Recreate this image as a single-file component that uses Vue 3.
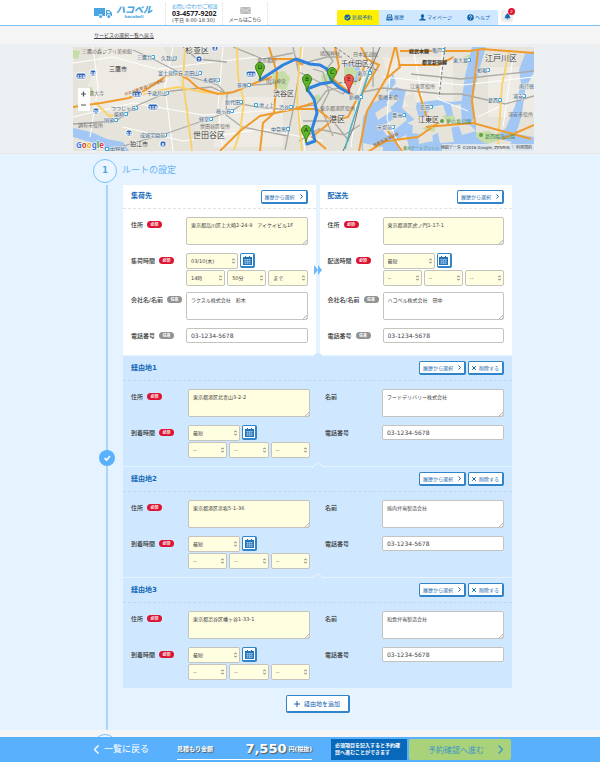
<script setup>
import { reactive } from 'vue'

const nav = [
  { icon: 'check', text: '新規予約', current: true },
  { icon: 'tray', text: '履歴' },
  { icon: 'user', text: 'マイページ' },
  { icon: 'help', text: 'ヘルプ' },
]

const ends = reactive([
  {
    id: 'pickup', title: '集荷先', timeLabel: '集荷時間',
    address: '東京都品川区上大崎2-24-9　アイケイビル1F',
    day: '03/10(木)', parts: ['14時', '50分', 'まで'],
    name: 'ラクスル株式会社　鈴木', tel: '03-1234-5678',
  },
  {
    id: 'delivery', title: '配送先', timeLabel: '配送時間',
    address: '東京都港区虎ノ門1-17-1',
    day: '最短', parts: ['--', '--', '--'],
    name: 'ハコベル株式会社　田中', tel: '03-1234-5678',
  },
])

const stops = reactive([
  { id: 'stop1', title: '経由地1', address: '東京都港区北青山3-2-2', name: 'フードデリバリー株式会社', tel: '03-1234-5678' },
  { id: 'stop2', title: '経由地2', address: '東京都港区赤坂5-1-36', name: '焼肉弁当製造会社', tel: '03-1234-5678' },
  { id: 'stop3', title: '経由地3', address: '東京都渋谷区幡ヶ谷1-33-1', name: '和食弁当製造会社', tel: '03-1234-5678' },
])

const wards = [
  ['杉並区', 112, 6, 8], ['世田谷区', 120, 91, 8], ['渋谷区', 200, 49, 7], ['三鷹市', 36, 24, 6],
  ['狛江市', 57, 99, 6], ['千代田区', 268, 19, 7], ['港区', 256, 75, 8], ['江東区', 345, 75, 7],
  ['江戸川区', 412, 14, 8],
]
const places = [
  ['三鷹の森ジブリ美術館', 9, 6], ['深大寺', 16, 48], ['調布市役所', 5, 80], ['世田谷区役所', 127, 81],
  ['東京都庁', 184, 15], ['明治神宮', 193, 36], ['靖国神社', 247, 8], ['日本武道館', 280, 9], ['東京都港区役所', 247, 63],
  ['築地市場', 305, 52], ['江東区役所', 337, 41], ['浦安市役所', 435, 69],
]
const stations = [
  ['三鷹台', 64, 12, 80], ['久我山', 88, 13, 102], ['富士見ヶ丘', 85, 28, 102], ['浜田山', 111, 28, 127],
  ['永福町', 130, 35, 145], ['笹塚', 164, 40, 176], ['千歳烏山', 74, 48, 94], ['つつじヶ丘', 38, 63, 63],
  ['柴崎', 41, 69, 53], ['国領', 31, 75, 43], ['新代田', 152, 57, 168], ['梅ヶ丘', 143, 66, 159],
  ['池ノ上', 186, 60, 183], ['渋谷', 206, 62, 218], ['経堂', 126, 74, 138], ['中目黒', 198, 84, 215],
  ['成城学園前', 67, 90, 92], ['中野島', 37, 104, 34], ['亀戸', 359, 5, 370], ['東京', 284, 28, 297],
  ['新橋', 276, 52, 288], ['豊洲', 319, 70, 331], ['辰巳', 347, 62, 358], ['市場前', 304, 82, 320],
  ['葛西', 415, 55, 427], ['浦安', 440, 51, 451], ['船堀', 404, 25, 415], ['東大島', 380, 15, 396], ['南行徳', 446, 41, 459],
]
const shields = [
  ['110', 8, 29], ['14', 20, 26], ['114', 64, 47], ['118', 80, 60], ['20', 23, 64],
  ['7', 126, 12], ['420', 178, 27], ['11', 56, 86], ['8', 90, 97], ['4', 142, 1],
]
const pins = [
  ['A', 233, 84, 96], ['B', 234, 33, 45], ['C', 259, 26, 36], ['D', 187, 21, 33], ['E', 276, 33, 46],
]
</script>

<template>
  <div class="page">
    <header class="top">
      <a class="logo" href="#">
        <svg class="truck" viewBox="0 0 18 12" aria-hidden="true">
          <path d="M0 1h11v8H8.600a2 2 0 0 0-4 0H0zM12 3h3.500L18 6v3h-1.200a2 2 0 0 0-4 0H12z" fill="#4aa5e2" />
          <path d="M13.200 4.200h1.800l1.400 1.900h-3.200z" fill="#fff" />
          <circle cx="6.600" cy="9.600" r="1.500" fill="#4aa5e2" /><circle cx="14.800" cy="9.600" r="1.500" fill="#4aa5e2" />
        </svg>
        <span class="brand"><b>ハコベル</b><small>hacobell</small></span>
      </a>
      <div class="contact">
        <span class="ask">お問い合わせ/ご相談</span>
        <strong>03-4577-9202</strong>
        <span>(平日 9:00-18:30)</span>
      </div>
      <a class="mail" href="#">
        <svg viewBox="0 0 12 8" aria-hidden="true"><path d="M0 0h12v8H0z" fill="#bbb" /><path d="M0 .5l6 4 6-4M0 8l4.500-4M12 8L7.500 4" fill="none" stroke="#eee" stroke-width=".8" /></svg>
        メールはこちら
      </a>
      <nav>
        <a v-for="n in nav" :key="n.text" href="#" :class="{ current: n.current }">
          <svg viewBox="0 0 8 8" aria-hidden="true">
            <template v-if="n.icon === 'check'"><circle cx="4" cy="4" r="3.500" fill="#1164ae" /><path d="M2.200 4l1.300 1.400L6 2.800" fill="none" stroke="#ff0" /></template>
            <template v-else-if="n.icon === 'tray'"><path d="M1.500.5h5l1 4V7.500h-7V4.500z" fill="#1164ae" /><path d="M2.200 1.700h3.600M1.900 3h4.200M1.300 4.700h1.500l.5 1h1.400l.5-1h1.500" fill="none" stroke="#fff" stroke-width=".7" /></template>
            <path v-else-if="n.icon === 'user'" d="M4 .3a1.800 1.900 0 0 1 1.100 3.500L5 5l2.700 1.200v1.300H.3V6.200L3 5l-.1-1.200A1.800 1.900 0 0 1 4 .3z" fill="#1164ae" />
            <template v-else><circle cx="4" cy="4" r="3.700" fill="#1164ae" /><path d="M2.800 3.200C2.800 1.500 5.300 1.600 5.300 3 5.300 3.900 4 3.900 4 5M4 5.700v.8" fill="none" stroke="#fff" stroke-width=".9" /></template>
          </svg>
          {{ n.text }}
        </a>
      </nav>
      <button class="bell" type="button" aria-label="お知らせ">
        <svg viewBox="0 0 8 8" aria-hidden="true"><path d="M4 .3c.5 0 .6.4.6.7 2 .6 1.700 3.400 2.900 5H.5c1.200-1.600.9-4.400 2.900-5 0-.3.100-.7.6-.7zM3 6.500h2a1 1 0 0 1-2 0z" fill="#1164ae" /></svg>
        <span class="count">2</span>
      </button>
    </header>

    <div class="crumb"><a href="#">サービスの選択一覧へ戻る</a></div>

    <div class="mapwrap">
      <svg class="map" viewBox="0 0 461 104" preserveAspectRatio="xMidYMid slice" role="img" aria-label="ルート地図">
        <rect width="461" height="104" fill="#e6e3db" />
        <g fill="#eeebe4">
          <path d="M30 0h60l18 40-60 28-40-12zM150 50h60v50h-70zM310 10h70v50h-60zM415 20h46v50h-46z" />
        </g>
        <g fill="#c5dda6">
          <path d="M199 26l12-2 6 7-4 13-12-4zM248 28l12-3 2 10-13 2zM238 50l8-3 3 6-8 4zM345 76l18 2-2 7-16-4zM369 69l10-3 4 6-8 4zM398 86l18-2 14 8-20 6zM10 42l9-2 2 8-9 2zM0 3l7 1-2 8-5-1zM390 10l8-3 2 9-8 2zM333 90l20-2v10l-16 2z" />
          <path d="M271 20l12-1 5 9-5 10-12-4z" />
        </g>
        <g fill="#a3c7f4">
          <path d="M289 104l-1-13 2-21 9-14 10-4 14-12 10 3-4 18 12 11-2 14 20 3 10-6 12-3 22-3v13l8 6 10 2 8 6h-140z" />
          <path d="M399 0h14l-6 20-5 20-3 15 2 14-3 10h-9l-1-20 4-30z" />
          <path d="M461 4l-9 3-6 16 2 14-6 22-9 22-12 10 18 4-8 9h30v-14l-18-3 6-20 3-24 9-18z" />
          <path d="M0 81l18 4 16 7 16 3 6 9H34l-10-7L0 90z" />
          <path d="M320 26l3 10-8 10-2-3zM342 56l22-3 14 2 18-2v4l-18 1 2 10-6 2-4-12-12 2-8 14-4-2zM271 20l4-5 9 1 4 8-4 11-3-1 3-9-4-7z" />
        </g>
        <g fill="#e6e3db">
          <path d="M302 66l14-9 3 7-14 9zM308 80l22-14 4 7-20 16zM323 93l10-5 4 16h-10zM313 56l8-8 5 4-8 8zM334 76l14-6 12 6-12 6zM345 88l14-2 1 8-14 3zM364 82l14-3 3 16-14 1zM331 50l10-4 3 12-8 2zM290 104v-8l20 4v4zM385 76l12 2 6 6-14 4z" />
        </g>
        <g fill="none" stroke="#fff" stroke-width="1">
          <path d="M0 16l40-6 44 12 40-5 60-7 60 5M20 0l5 40-8 50M100 0l-8 40 8 64M150 0l-5 60 5 44M0 70l60-14 70 12 90-6M230 0l-6 50 8 54M300 0l-16 50-6 50M340 0l10 56M370 0l-5 52 30 12M310 30l80 8 70-8M405 70l50-24M440 10l-10 70M318 12l-4 60 15 32M50 80l60 14 80-12 60 12" />
        </g>
        <g fill="none" stroke="#aaa9a6" stroke-width="1.300">
          <path d="M0 77l43-3 20-15 35-15 40-4 16 7 25-9 20-1M36 103l56-16 46-16 21-7 10-7 15 3 32 3M60 3l16 7 35 18 34 10 9 10-1 20 16 12 46 9M220 0l6 27-6 36-8 40M224 18l30-8 15 0M226 25l20 10 24 12 8-9M223 60l20-2 10-14 16-4 12 8M226 94l20-12 25 6 16-10M240 22l10 3 6 20-8 16 12 28M250 0l10 14-8 10M276 94l-16-20-30 0M290 45l20-4 60 6 18 0 44 10 29-8M300 0v40M160 0l30 12 30-6M110 0l14 12 30 3M338 27l50 5 73-8" />
        </g>
        <g fill="none" stroke="#fbd165" stroke-width="1.800">
          <path d="M112 0l-2 36 4 28 5 40M164 0l1 30 6 25-4 30-6 18M22 55l14 14 14-3M60 50l24-6 21-4 24 5 25 2M228 0l-4 50 5 54M436 4l-7 34-4 60" />
        </g>
        <g fill="none" stroke="#f19b2c" stroke-width="2">
          <path d="M0 60l28-4 28-5 17-8 20-14 12-2 10 5 10 9 20 6 16-2 26-11 12-4M147 104l20-20 20-15 35-7 18-6M196 0l8 26-3 40-11 10-3 28M200 12h20l10 6M286 104l8-40 20-34 8-30M262 0l4 20-6 12 24 20-9 18-16 4-20 16 14 12M323 0l4 20-14 12M327 4h70l12-2 52 4M325 18h40l16-8M345 42l8 26 12 8-20 14-32 4-20 12M353 80l47-4 58 16M461 78l-32 14M405 4l-6 50 3 22M315 84l14 20M224 62h20l18 14M288 0l6 12-8 22M294 12l12 6-20 34" />
        </g>
        <g fill="none" stroke="#777" stroke-width="1"><path d="M270 104l10-22 8-32 8-24 11-26" /><path d="M262 0l20 14 24 10M266 36l20-2 14-20M372 0l-6 50" stroke-dasharray="3 2" /></g>
        <path d="M272 102l6-22 9-28 10-30" fill="none" stroke="#49b4c4" stroke-width="1.500" />
        <path d="M187 33l23-15 13-6 14 5 10 1 7 4 5 13-12 2-13 5 7 10 3 14-5 16 3 12-8 3M259 34l8 7 9 5" fill="none" stroke="#2e82e0" stroke-width="3" stroke-linejoin="round" stroke-linecap="round" />
        <g class="shield">
          <g v-for="s in shields" :key="s[0]">
            <rect :x="s[1] - (s[0].length > 2 ? 5 : 3)" :y="s[2] - 3" :width="s[0].length > 2 ? 10 : 6" height="6" rx="2" />
            <text :x="s[1]" :y="s[2] + 2">{{ s[0] }}</text>
          </g>
        </g>
        <g v-for="s in stations" :key="s[0]">
          <rect :x="s[3] - 2" :y="s[2] - 4" width="4" height="4" rx="1" fill="#35a7dc" /><rect :x="s[3] - 1" :y="s[2] - 3" width="2" height="2" fill="#fff" />
          <text class="station" :x="s[1]" :y="s[2]">{{ s[0] }}</text>
        </g>
        <text v-for="p in places" :key="p[0]" class="place" :x="p[1]" :y="p[2]">{{ p[0] }}</text>
        <text v-for="w in wards" :key="w[0]" class="ward" :x="w[1]" :y="w[2]" :font-size="w[3]">{{ w[0] }}</text>
        <text class="road" transform="translate(52 49) rotate(-20)">中央自動車道(河口湖線)</text>
        <text class="road" transform="translate(301 100) rotate(-26)">首都高速湾岸線</text>
        <text class="line" x="336" y="6">総武本線</text><text class="line" x="349" y="17">都営新宿線</text>
        <text class="park" x="373" y="76">夢の島公園</text><text class="park" x="412" y="91">葛西臨海公園</text><text class="park small" x="330" y="103">東京ゲートブリッジ</text>
        <g fill="#5ba546"><circle cx="369" cy="74" r="2" /><circle cx="408" cy="88" r="2" /></g>
        <g v-for="p in pins" :key="p[0]" class="pin" :class="{ goal: p[0] === 'E' }">
          <path :d="`M${p[1]} ${p[3]}C${p[1]} ${p[3] - 6} ${p[1] - 4.5} ${p[2] + 3} ${p[1] - 4.5} ${p[2] - 1}a4.500 4.500 0 0 1 9 0C${p[1] + 4.5} ${p[2] + 3} ${p[1]} ${p[3] - 6} ${p[1]} ${p[3]}z`" />
          <text :x="p[1]" :y="p[2] + 1">{{ p[0] }}</text>
        </g>
        <rect x="5" y="41" width="12" height="23" rx="1" fill="#fff" />
        <path d="M8 47h5M10.500 44.500v5M8 58h5" stroke="#555" stroke-width="1.200" />
        <text class="google" x="3" y="101"><tspan fill="#4279e8">G</tspan><tspan fill="#e33f31">o</tspan><tspan fill="#eeb211">o</tspan><tspan fill="#4279e8">g</tspan><tspan fill="#30a050">l</tspan><tspan fill="#e33f31">e</tspan></text>
        <rect x="369" y="97" width="92" height="7" fill="#f2f1ee" opacity=".75" />
        <text class="copy" x="459" y="102">地図データ ©2016 Google, ZENRIN ｜ 利用規約</text>
      </svg>
    </div>

    <main>
      <h1><span class="step">1</span>ルートの設定</h1>
      <div class="body">
        <div class="rail">
          <svg viewBox="0 0 16 16" aria-hidden="true"><circle cx="8" cy="8" r="8" fill="#59b1fd" /><path d="M5.500 8l2 2 3.500-4" fill="none" stroke="#fff" stroke-width="1.600" /></svg>
        </div>
        <form @submit.prevent>
          <div class="ends">
            <section v-for="e in ends" :key="e.id" class="card">
              <div class="head"><h2>{{ e.title }}</h2><button type="button">履歴から選択<svg class="chev" viewBox="0 0 3 5" aria-hidden="true"><path d="M.5.5l2 2-2 2" /></svg></button></div>
              <div class="fields">
                <label :for="e.id + 'a'">住所<em>必須</em></label>
                <textarea :id="e.id + 'a'" v-model="e.address" class="need"></textarea>
                <label :for="e.id + 'd'">{{ e.timeLabel }}<em>必須</em></label>
                <div class="when">
                  <span class="sel day"><select :id="e.id + 'd'"><option>{{ e.day }}</option></select><svg viewBox="0 0 3 6" aria-hidden="true"><path d="M.3 2.300L1.500.8l1.200 1.500M.3 3.700l1.200 1.500 1.200-1.500" /></svg></span>
                  <button class="cal" type="button" aria-label="カレンダー"><svg viewBox="0 0 9 9" aria-hidden="true"><path d="M0 1h9v8H0z" fill="#2272b9" /><path d="M2.500 0v2M6.500 0v2" stroke="#2272b9" /><path d="M1 3.500h7M1 5.300h7M1 7.200h7M2.700 3v5.200M4.500 3v5.200M6.300 3v5.200" stroke="#bcd8f0" stroke-width=".5" /></svg></button>
                  <span v-for="(p, i) in e.parts" :key="i" class="sel part"><select :aria-label="e.timeLabel + (i + 1)"><option>{{ p }}</option></select><svg viewBox="0 0 3 6" aria-hidden="true"><path d="M.3 2.300L1.500.8l1.200 1.500M.3 3.700l1.200 1.500 1.200-1.500" /></svg></span>
                </div>
                <label :for="e.id + 'n'" class="snug">会社名/名前<em class="any">任意</em></label>
                <textarea :id="e.id + 'n'" v-model="e.name" class="snug"></textarea>
                <label :for="e.id + 't'">電話番号<em class="any">任意</em></label>
                <input :id="e.id + 't'" v-model="e.tel" type="tel">
              </div>
            </section>
            <svg class="arrow" viewBox="0 0 8 10" aria-hidden="true"><path d="M0 0l4 5-4 5zM4 0l4 5-4 5z" fill="#6bb9fb" /></svg>
          </div>
          <section v-for="s in stops" :key="s.id" class="stop">
            <svg class="notch" viewBox="0 0 12 6" aria-hidden="true"><path d="M0 6l6-5 6 5z" fill="#d0e8ff" /><path d="M0 5.500l6-5 6 5" fill="none" stroke="#edf6ff" /></svg>
            <div class="head"><h2>{{ s.title }}</h2><button type="button">履歴から選択<svg class="chev" viewBox="0 0 3 5" aria-hidden="true"><path d="M.5.5l2 2-2 2" /></svg></button><button class="del" type="button"><svg class="cross" viewBox="0 0 4 4" aria-hidden="true"><path d="M.2.2l3.600 3.600M3.800.2L.2 3.800" /></svg>削除する</button></div>
            <div class="halves">
              <div class="fields">
                <label :for="s.id + 'a'">住所<em>必須</em></label>
                <textarea :id="s.id + 'a'" v-model="s.address" class="need"></textarea>
                <label :for="s.id + 'd'">到着時間<em>必須</em></label>
                <div class="when">
                  <span class="sel day"><select :id="s.id + 'd'"><option>最短</option></select><svg viewBox="0 0 3 6" aria-hidden="true"><path d="M.3 2.300L1.500.8l1.200 1.500M.3 3.700l1.200 1.500 1.200-1.500" /></svg></span>
                  <button class="cal" type="button" aria-label="カレンダー"><svg viewBox="0 0 9 9" aria-hidden="true"><path d="M0 1h9v8H0z" fill="#2272b9" /><path d="M2.500 0v2M6.500 0v2" stroke="#2272b9" /><path d="M1 3.500h7M1 5.300h7M1 7.200h7M2.700 3v5.200M4.500 3v5.200M6.300 3v5.200" stroke="#bcd8f0" stroke-width=".5" /></svg></button>
                  <span v-for="i in 3" :key="i" class="sel part"><select :aria-label="'到着時間' + i"><option>--</option></select><svg viewBox="0 0 3 6" aria-hidden="true"><path d="M.3 2.300L1.500.8l1.200 1.500M.3 3.700l1.200 1.500 1.200-1.500" /></svg></span>
                </div>
              </div>
              <div class="fields">
                <label :for="s.id + 'n'">名前</label>
                <textarea :id="s.id + 'n'" v-model="s.name"></textarea>
                <label :for="s.id + 't'">電話番号</label>
                <input :id="s.id + 't'" v-model="s.tel" type="tel">
              </div>
            </div>
          </section>
          <button class="add" type="button"><svg viewBox="0 0 6 6" aria-hidden="true"><path d="M0 3h6M3 0v6" stroke="#1164ae" /></svg>経由地を追加</button>
        </form>
      </div>
    </main>

    <div class="next"><span class="step"></span></div>

    <footer>
      <a class="back" href="#"><svg viewBox="0 0 5 9" aria-hidden="true"><path d="M4.500.5l-4 4 4 4" fill="none" stroke="#fff" stroke-width="1.400" /></svg>一覧に戻る</a>
      <div class="price"><span>見積もり金額</span><strong>7,550</strong><span>円(税抜)</span></div>
      <p>必須項目を記入すると予約確認へ進むことができます</p>
      <button class="go" type="button">予約確認へ進む<svg viewBox="0 0 5 9" aria-hidden="true"><path d="M.5.5l4 4-4 4" fill="none" stroke="#3f96c4" stroke-width="1.400" /></svg></button>
    </footer>
  </div>
</template>

<style>
body { margin: 0; background: #f5f5f5; }
</style>

<style scoped>
.page, .page button, .page input, .page select, .page textarea { font-family: "DejaVu Sans", "Noto Sans CJK JP", sans-serif; }
.page { font-size: 5px; line-height: 7px; color: #444; }
.page * { box-sizing: border-box; }
a { color: inherit; text-decoration: none; }
svg { display: block; flex: none; }
button { cursor: pointer; }

.top { display: flex; align-items: flex-end; height: 26px; padding: 0 87px 0 94px; background: #fff; border-bottom: 1px solid #7cc2f7; }
.logo { display: flex; gap: 4px; align-self: flex-start; padding-top: 5px; width: 71px; color: #4aa5e2; }
.truck { width: 18px; height: 12px; margin-top: 2px; }
.brand { display: flex; flex-direction: column; align-items: center; }
.brand b { font-size: 9px; line-height: 10px; font-style: italic; font-weight: 900; }
.brand small { font-size: 4px; line-height: 4px; font-weight: bold; }
.contact, .mail { display: flex; flex-direction: column; height: 22px; border-left: 1px dotted #ddd; }
.contact { width: 57px; padding-left: 6px; white-space: nowrap; }
.contact span { line-height: 7px; font-feature-settings: "palt"; }
.contact .ask { color: #4aa5e2; }
.contact strong { font-family: "Open Sans", sans-serif; font-size: 7px; line-height: 7px; color: #222; }
.mail { width: 46px; align-items: center; gap: 2px; padding-top: 4px; border-right: 1px dotted #ddd; font-feature-settings: "palt"; }
.mail svg { width: 11px; height: 7px; }
nav { display: flex; height: 15px; margin-left: auto; background: #d0e8ff; border-radius: 2px 2px 0 0; color: #1164ae; }
nav a { display: flex; align-items: center; gap: 1px; padding: 0 8px 0 7px; white-space: nowrap; }
nav a.current { padding: 0 7px; background: #ffef00; border-radius: 2px 0 0 0; }
nav svg { width: 7px; height: 7px; }
.bell { position: relative; align-self: flex-start; display: grid; place-items: center; width: 12px; height: 12px; margin: 10px 0 0 3px; padding: 0; border: 0; border-radius: 2px; background: #eee; }
.bell svg { width: 7px; height: 7px; }
.count { position: absolute; top: -2px; right: -2px; width: 7px; height: 7px; border-radius: 50%; background: #dc1432; color: #fff; font-size: 4px; line-height: 7px; text-align: center; }

.crumb { height: 18px; padding: 6px 94px 0; background: #f5f5f5; }
.crumb a { text-decoration: underline; }
.mapwrap { padding: 3px 66px 2px 73px; background: #edf0f3; border-bottom: 1px solid #e8e8e8; }
.map { width: 100%; height: 104px; }
.map text { font-size: 5px; }
.map .station { fill: #35638c; stroke: #eeebe4; stroke-width: 1px; paint-order: stroke; }
.map .place { fill: #6b6b6b; }
.map .ward { fill: #333; font-size: revert-layer; stroke: #f3f1ec; stroke-width: 1px; paint-order: stroke; }
.map .road { fill: #a0601c; font-size: 4px; }
.map .line { fill: #333; font-weight: bold; }
.map .park { fill: #3c8a4a; }
.map .park.small { font-size: 4px; }
.map .copy { fill: #333; font-size: 4px; text-anchor: end; }
.map .google { font-family: "Noto Sans", sans-serif; font-size: 8px; font-weight: bold; stroke: #fff; stroke-width: 1px; paint-order: stroke; }
.shield rect { fill: #2d63b4; stroke: #fff; stroke-width: 1px; }
.map .shield text { fill: #fff; font-size: 4px; font-weight: bold; text-anchor: middle; }
.pin path { fill: #5db52c; stroke: #3a8216; stroke-width: 1px; }
.pin.goal path { fill: #ee5850; stroke: #b8362f; }
.pin text { font-size: 6px; text-anchor: middle; fill: #163b06; }
.pin.goal text { fill: #5d1210; }

main { padding: 4px 88px 0 93px; background: #e5f2ff; }
h1 { display: flex; align-items: center; gap: 5px; height: 25px; margin: 0; color: #64b2f2; font-size: 9px; font-weight: normal; }
.step { display: grid; place-items: center; width: 24px; height: 24px; border: 1px solid #7cc2f7; border-radius: 50%; background: #eaf5ff; color: #4aa5e2; font-size: 8px; font-weight: bold; }
.body { display: flex; margin-top: 2px; }
.rail { display: flex; align-items: center; justify-content: center; width: 30px; padding-right: 2px; background: linear-gradient(#a9d5fb, #a9d5fb) 13px 0 / 2px 100% no-repeat; }
.rail svg { width: 16px; height: 16px; }
form { flex: 1; min-width: 0; display: flex; flex-direction: column; gap: 1px; padding-bottom: 17px; }
.ends { position: relative; display: grid; grid-template-columns: 1fr 1fr; gap: 4px; }
.arrow { position: absolute; top: 80px; left: 50%; width: 8px; height: 10px; margin-left: -4px; }
.card { background: #fff; }
.head { display: flex; align-items: center; gap: 2px; height: 24px; padding: 0 8px; border-bottom: 1px dashed #dfe3e6; }
h2 { flex: 1; margin: 0; color: #1169b8; font-size: 7px; font-weight: bold; }
.head button, .add { display: flex; align-items: center; justify-content: center; height: 14px; padding: 0; border: 1px solid #3284c8; border-right-width: 2px; border-bottom-width: 2px; border-radius: 2px; background: #fff; color: #1164ae; font-size: 5px; white-space: nowrap; }
.head button { width: 47px; gap: 5px; }
.head .del { width: 36px; gap: 3px; }
.chev { width: 3px; height: 5px; fill: none; stroke: #1164ae; stroke-width: 1px; }
.cross { width: 4px; height: 4px; fill: none; stroke: #1164ae; stroke-width: 1px; }
.fields { display: grid; grid-template-columns: 55px minmax(0, 1fr); row-gap: 8px; align-items: start; align-content: start; }
.card .fields { padding: 8px 8px 12px; }
label { display: flex; align-items: center; gap: 4px; height: 15px; color: #333; font-size: 6px; font-weight: 500; white-space: nowrap; }
.snug { margin-top: -2px; }
em { width: 15px; height: 7px; border-radius: 4px; background: #dc1432; color: #fff; font-size: 4px; line-height: 7px; font-style: normal; font-weight: bold; text-align: center; }
em.any { background: #909090; }
textarea, input, select { display: block; width: 100%; margin: 0; border: 1px solid #c4c4bf; border-radius: 2px; background: #fff; color: #444; font-size: 5px; line-height: 7px; outline: 0; }
textarea { height: 28px; padding: 4px; resize: none; overflow: hidden; background: linear-gradient(135deg, transparent 50%, #bbb 50%, #bbb 62%, #eee 62%, #eee 78%, #bbb 78%) right bottom / 4px 4px no-repeat #fff; }
textarea.need, select { background-color: #fffee1; }
input { height: 15px; padding: 0 4px; font-size: 6px; }
.when { display: flex; flex-wrap: wrap; gap: 1px 2px; }
.sel { display: grid; align-items: center; }
.sel select { grid-area: 1 / 1; height: 16px; padding: 0 4px; appearance: none; }
.sel svg { grid-area: 1 / 1; justify-self: end; width: 3px; height: 6px; margin-right: 3px; pointer-events: none; fill: none; stroke: #777; stroke-width: 1px; }
.day { width: 52px; }
.part { flex: 1; min-width: 38px; }
.cal { display: grid; place-items: center; width: 15px; height: 15px; margin-right: 50px; padding: 0; border: 1px solid #3284c8; border-right-width: 2px; border-bottom-width: 2px; border-radius: 2px; background: #fff; }
.cal svg { width: 9px; height: 9px; }

.stop { position: relative; background: #d0e8ff; }
.stop .head { height: 25px; border-color: #bfd9ee; }
.notch { position: absolute; top: -5px; left: 50%; width: 12px; height: 6px; margin-left: -6px; }
.halves { display: grid; grid-template-columns: 1fr 1fr; column-gap: 15px; padding: 8px; }
.stop .fields { grid-template-columns: 57px minmax(0, 1fr); }
.add { align-self: center; gap: 4px; width: 64px; height: 18px; margin-top: 6px; font-size: 6px; }
.add svg { width: 6px; height: 6px; }

.next { height: 7px; padding: 4px 93px 0; overflow: hidden; background: #f5f5f5; }
footer { display: flex; align-items: center; height: 25px; padding: 0 89px 0 94px; background: #59b1fd; color: #fff; }
.back { display: flex; align-items: center; gap: 5px; width: 83px; font-size: 9px; }
.back svg, .go svg { width: 5px; height: 9px; }
.price { display: flex; align-items: center; gap: 2px; width: 135px; height: 20px; border-bottom: 1px solid #fff; font-size: 6px; line-height: 16px; font-weight: bold; text-shadow: 1px 1px 1px #555; }
.price span:first-child { flex: 1; }
.price strong { font-size: 13px; }
footer p { width: 76px; height: 21px; margin: 0 2px 0 auto; padding: 3px 4px; background: #0868b9; font-weight: bold; word-break: break-all; }
.go { display: flex; align-items: center; justify-content: flex-end; gap: 14px; width: 102px; height: 21px; padding: 0 8px; border: 0; border-radius: 2px; background: #a9d27b; color: #3f96c4; font-size: 8px; white-space: nowrap; }
</style>
